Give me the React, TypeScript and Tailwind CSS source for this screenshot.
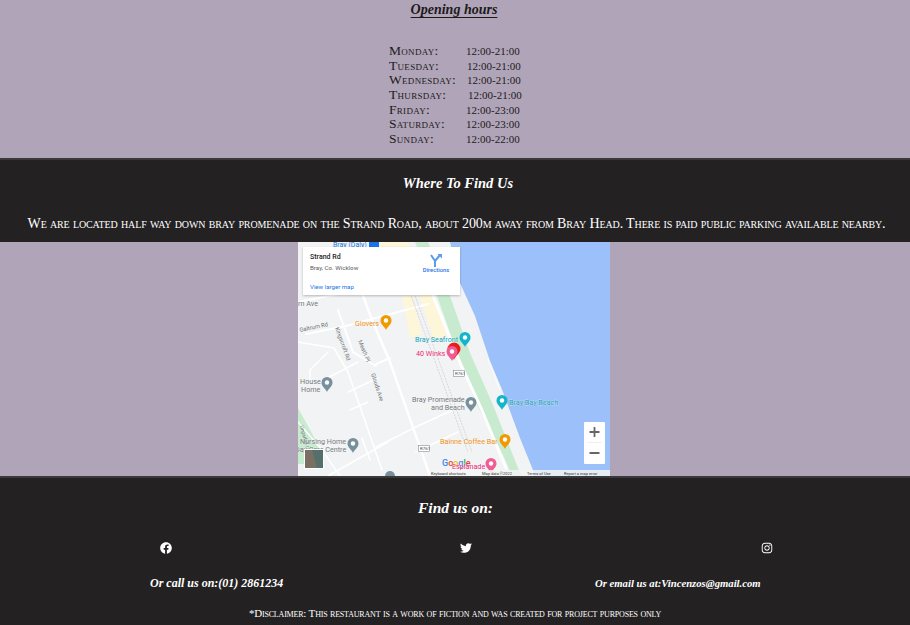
import { FaFacebook, FaInstagram, FaTwitter } from "react-icons/fa";

const hours = [
  { day: "Monday:", time: "12:00-21:00", w: "w-[77px]" },
  { day: "Tuesday:", time: "12:00-21:00", w: "w-[78px]" },
  { day: "Wednesday:", time: "12:00-21:00", w: "w-[78px]" },
  { day: "Thursday:", time: "12:00-21:00", w: "w-[79px]" },
  { day: "Friday:", time: "12:00-23:00", w: "w-[77px]" },
  { day: "Saturday:", time: "12:00-23:00", w: "w-[77px]" },
  { day: "Sunday:", time: "12:00-22:00", w: "w-[77px]" },
];

function Pin({ x, y, color }: { x: number; y: number; color: string }) {
  return (
    <g transform={`translate(${x} ${y})`}>
      <path d="M0 9 C-1.2 5.8 -5.5 3.5 -5.5 -0.5 A5.5 5.5 0 1 1 5.5 -0.5 C5.5 3.5 1.2 5.8 0 9Z" fill={color} />
      <circle cx="0" cy="-0.5" r="2.2" fill="#fff" />
    </g>
  );
}

function MapLabel({ x, y, fill, children }: { x: number; y: number; fill: string; children: string }) {
  return (
    <text x={x} y={y} fill={fill} fontSize="7.2" stroke="#fff" strokeWidth="0.3" paintOrder="stroke">
      {children}
    </text>
  );
}

function StrandMap() {
  return (
    <svg viewBox="0 0 312 234" className="block w-[312px] h-[234px] font-['Roboto',sans-serif]">
      <rect width="312" height="234" fill="#f1f3f4" />
      {/* green strips */}
      <path d="M117 0 L130 0 L152 54 L172 111 L195 163 L220 226 L224 234 L214 234 L205 213 L179 163 L159 111 L139 54Z" fill="#c8ebd0" />
      <path d="M0 166 L22 206 L14 222 L0 222Z" fill="#c8ebd0" />
      {/* yellow blocks */}
      <path d="M104 55 L114 52 L124 92 L112 96Z M120 50 L134 46 L150 92 L136 98Z" fill="#fdf6d8" />
      <path d="M80 0 L110 0 L118 12 L88 18Z" fill="#fdf6d8" />
      {/* water */}
      <path d="M152 0 L162 41 L177 74 L192 119 L205 150 L222 196 L235 228 L236 234 L312 234 L312 0Z" fill="#9cc0f9" />
      <path d="M190 117 L202 148" stroke="#fff" strokeWidth="0.8" fill="none" />
      {/* roads */}
      <g stroke="#fff" fill="none" strokeLinecap="round">
        <path d="M131 44 L163 123 L183 166 L208 226" strokeWidth="3" />
        <path d="M60 40 L74 78 L92 120 L132 234" strokeWidth="2.5" />
        <path d="M0 60 L40 52 M8 92 L48 84 L130 62 M74 78 L92 120 M40 68 L55 110 L78 124 M78 122 L92 116" strokeWidth="2" />
        <path d="M0 100 L36 106 L50 130 L84 228 M22 140 L60 120 M50 150 L80 136 M64 196 L72 218 M78 205 L120 184 L168 162 M118 210 L160 190 M30 234 L90 200" strokeWidth="1.6" />
        <path d="M30 110 L12 128 L12 142 M0 180 L24 208 L42 234 M52 168 L70 160" strokeWidth="1.4" />
      </g>
      <g stroke="#c8ccd0" fill="none" strokeWidth="0.7">
        <path d="M108 40 L130 100 L170 210" strokeDasharray="2 1" />
        <path d="M112 40 L134 100 L174 210" strokeDasharray="2 1" />
      </g>

      {/* labels and pins */}
      <MapLabel x={57} y={84} fill="#ee8f14">Glovers</MapLabel>
      <MapLabel x={0} y={64} fill="#70757a">rn Ave</MapLabel>
      <text transform="rotate(-12 2 90)" x={2} y={90} fill="#70757a" fontSize="5.800">Galtrum Rd</text>
      <text transform="rotate(70 37 86)" x={37} y={86} fill="#70757a" fontSize="5.800">Kingscroft Rd</text>
      <text transform="rotate(68 60 99)" x={60} y={99} fill="#70757a" fontSize="5.800">Meath Pl</text>
      <text transform="rotate(72 73 132)" x={73} y={132} fill="#70757a" fontSize="5.800">Glouds Ave</text>
      <text transform="rotate(75 2 184)" x={2} y={184} fill="#70757a" fontSize="5">Ungarhill Ln</text>
      <Pin x={88} y={79} color="#f29900" />
      {/* selected place marker sits behind the 40 Winks pin */}
      <path d="M156 118 C155 114 149.500 111 149.500 107 A6.500 6.500 0 1 1 162.500 107 C162.500 111 157 114 156 118Z" fill="#ea1d1d" />
      <MapLabel x={117} y={100} fill="#129eaf">Bray Seafront</MapLabel>
      <Pin x={167} y={96} color="#12b5cb" />
      <MapLabel x={118} y={114} fill="#e91e73">40 Winks</MapLabel>
      <Pin x={154} y={110} color="#f25c92" />
      <MapLabel x={2} y={142} fill="#70757a">House</MapLabel>
      <MapLabel x={3} y={150} fill="#70757a">Home</MapLabel>
      <Pin x={29} y={141} color="#78909c" />
      <MapLabel x={114} y={160} fill="#70757a">Bray Promenade</MapLabel>
      <MapLabel x={133} y={168} fill="#70757a">and Beach</MapLabel>
      <Pin x={173} y={161} color="#78909c" />
      <Pin x={204} y={159} color="#12b5cb" />
      <MapLabel x={211} y={163} fill="#129eaf">Bray Bay Beach</MapLabel>
      <MapLabel x={142} y={202} fill="#ee8f14">Bainne Coffee Bar</MapLabel>
      <Pin x={207} y={198} color="#f29900" />
      <MapLabel x={2} y={202} fill="#70757a">Nursing Home</MapLabel>
      <MapLabel x={-3} y={210} fill="#70757a">Day Care Centre</MapLabel>
      <Pin x={55} y={202} color="#78909c" />
      <text x={144} y={224} fontSize="9" fontWeight="500" fill="#4285f4">G<tspan fill="#ea4335">o</tspan><tspan fill="#fbbc04">o</tspan><tspan fill="#4285f4">g</tspan><tspan fill="#34a853">l</tspan><tspan fill="#ea4335">e</tspan></text>
      <MapLabel x={154} y={227} fill="#e91e73">Esplanade</MapLabel>
      <Pin x={193} y={222} color="#f25c92" />
      <circle cx="92" cy="234" r="5" fill="#78909c" />

      {/* road shields */}
      <g fontSize="4.400" fill="#444">
        <rect x="155.500" y="128.500" width="11" height="6" fill="#fff" stroke="#777" strokeWidth="0.5" />
        <text x="157" y="133.300">R761</text>
        <rect x="120.500" y="203.500" width="11" height="6" fill="#fff" stroke="#777" strokeWidth="0.5" />
        <text x="122" y="208.300">R761</text>
      </g>

      {/* transit label under the card */}
      <text x={35} y={5} fontSize="7" fill="#1a73e8">Bray (Daly)</text>
      <rect x="71" y="0" width="10" height="5" fill="#1a73e8" />

      {/* info card */}
      <rect x="5" y="5" width="157" height="48" fill="#fff" filter="drop-shadow(0 1px 1px rgba(0,0,0,0.25))" />
      <text x="12" y="17" fontSize="7" fontWeight="500" fill="#222">Strand Rd</text>
      <text x="12" y="28" fontSize="6.200" fill="#5b5b5b">Bray, Co. Wicklow</text>
      <text x="12" y="47" fontSize="6.100" fill="#1a73e8">View larger map</text>
      <path d="M133 13 L137 19 V25 M142 13 L137 19" stroke="#5b9bf0" strokeWidth="2" fill="none" />
      <path d="M139.500 12 L144 12 L144 16.500Z" fill="#5b9bf0" />
      <text x="138" y="30" fontSize="5.800" fontWeight="500" textAnchor="middle" fill="#1a73e8">Directions</text>

      {/* zoom control */}
      <rect x="286" y="180" width="21" height="42" rx="1" fill="#fff" />
      <path d="M291.500 190 H301.500 M296.500 185 V195 M291.500 211 H301.500" stroke="#666" strokeWidth="1.800" />
      <path d="M289 200.500 H304" stroke="#e6e6e6" strokeWidth="0.6" />

      {/* satellite thumb */}
      <rect x="6" y="207" width="20" height="20" fill="#fff" />
      <rect x="7" y="208" width="18" height="18" fill="#55706c" />
      <path d="M7 208 H14 L19 226 H7Z" fill="#7a6f63" />

      {/* attribution */}
      <rect x="132" y="228" width="180" height="6" fill="#f5f5f5" fillOpacity="0.85" />
      <g fontSize="4" fill="#333">
        <text x="133" y="233">Keyboard shortcuts</text>
        <text x="184" y="233">Map data ©2022</text>
        <text x="229" y="233">Terms of Use</text>
        <text x="266" y="233">Report a map error</text>
      </g>
    </svg>
  );
}

export default function App() {
  return (
    <div className="w-[910px] h-[625px] overflow-hidden bg-[#b0a4b8] font-['Liberation_Serif',serif] text-[#1c1a1b]">
      <section className="h-[158px] flex flex-col items-center">
        <h2 className="mt-[-1px] ml-[-2px] text-[14px] leading-[21px] whitespace-nowrap italic font-bold underline underline-offset-3">
          Opening hours
        </h2>
        <ul className="mt-[24px] w-[132px] text-[13.500px] leading-[14.67px] [font-variant:small-caps] tracking-[0.3px]">
          {hours.map((h) => (
            <li key={h.day} className="flex whitespace-nowrap items-baseline">
              <span className={`${h.w} shrink-0`}>{h.day}</span>
              <span className="text-[11px] tracking-[0px]">{h.time}</span>
            </li>
          ))}
        </ul>
      </section>

      <section className="h-[84px] border-t-2 border-[#3a3839] bg-[#232122] text-white text-center">
        <h2 className="pt-[13px] pl-[6px] text-[14.500px] leading-[21px] italic font-bold">Where To Find Us</h2>
        <p className="mt-[21px] text-[14px] leading-[17px] tracking-[-0.13px] [font-variant:small-caps] whitespace-nowrap pl-[3px]">
          We are located half way down bray promenade on the Strand Road, about 200m away from Bray Head. There is paid public parking available nearby.
        </p>
      </section>

      <section className="h-[234px] flex justify-center">
        <div className="ml-[-2px]">
          <StrandMap />
        </div>
      </section>

      <footer className="h-[149px] border-t-2 border-[#3a3839] bg-[#232122] text-white">
        <h2 className="pt-[19px] pl-[1px] text-center text-[15.500px] leading-[21px] italic font-bold">Find us on:</h2>
        <div className="mt-[24px] ml-[16px] flex">
          <div className="w-[300px] shrink-0 flex justify-center"><FaFacebook className="w-3 h-3" /></div>
          <div className="w-[300px] shrink-0 flex justify-center"><FaTwitter className="w-3 h-3" /></div>
          <div className="w-[300px] shrink-0 flex justify-center ml-[1px]"><FaInstagram className="w-3 h-3" /></div>
        </div>
        <div className="mt-[19px] flex leading-[20px] italic font-bold whitespace-nowrap">
          <div className="ml-[150px] w-[445px] text-[12px]">Or call us on:(01) 2861234</div>
          <div className="text-[10.700px]">Or email us at:Vincenzos@gmail.com</div>
        </div>
        <p className="mt-[13px] text-center text-[11px] tracking-[-0.19px] leading-[14px] [font-variant:small-caps]">
          *Disclaimer: This restaurant is a work of fiction and was created for project purposes only
        </p>
      </footer>
    </div>
  );
}
